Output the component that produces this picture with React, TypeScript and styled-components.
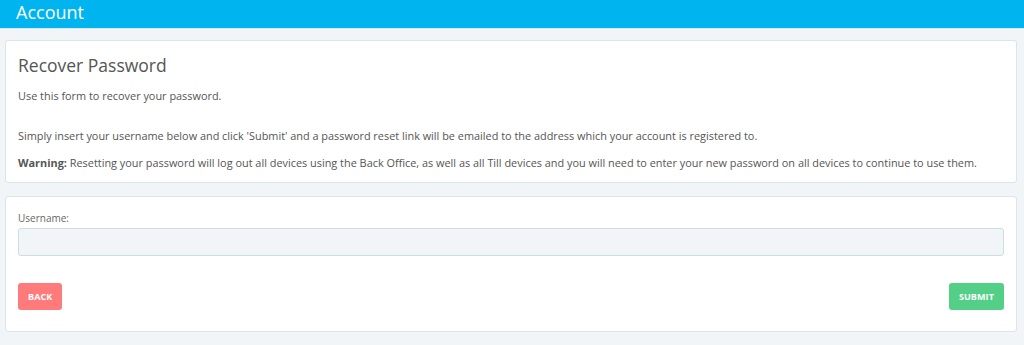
import React from "react";
import styled, { createGlobalStyle } from "styled-components";

const Global = createGlobalStyle`
  html, body { margin: 0; padding: 0; background: #f1f5f8; }
  body { font-family: "Open Sans", "Liberation Sans", sans-serif; color: #555; }
  * { box-sizing: border-box; }
`;

const Header = styled.header`
  height: 28px;
  background: #00b4f0;
  border-bottom: 1px solid #dde6ea;
  display: flex;
  align-items: center;
  padding-left: 16px;
  box-sizing: content-box;
`;

const HeaderTitle = styled.h1`
  margin: 0;
  color: #fff;
  font-size: 18px;
  font-weight: 400;
  line-height: 1;
  margin-top: -4px;
`;

const Content = styled.main`
  padding: 11px 7px 14px 5px;
  display: flex;
  flex-direction: column;
  gap: 13px;
`;

const Card = styled.section<{ $pad?: string }>`
  background: #fff;
  border: 1px solid #d8e7ea;
  border-radius: 3px;
  padding: ${(p) => p.$pad ?? "12px"};
`;

const Title = styled.h2`
  margin: 0 0 11px;
  font-size: 17.5px;
  font-weight: 400;
  line-height: 24px;
  color: #555;
`;

const Para = styled.p<{ $mb?: number }>`
  margin: 0 0 ${(p) => p.$mb ?? 0}px;
  font-size: 10.9px;
  line-height: 15px;
  color: #555;
  strong { font-weight: 700; }
`;

const Label = styled.label`
  display: block;
  font-size: 10px;
  line-height: 12px;
  color: #666;
  margin-bottom: 4px;
`;

const Input = styled.input`
  display: block;
  width: 100%;
  height: 28px;
  background: #f1f5f8;
  border: 1px solid #c9dfe2;
  border-radius: 3px;
  outline: none;
`;

const Actions = styled.div`
  display: flex;
  justify-content: space-between;
  margin-top: 27px;
`;

const Button = styled.button<{ $color: string }>`
  height: 27px;
  padding: 0 10px;
  border: none;
  border-radius: 3px;
  background: ${(p) => p.$color};
  color: #fff;
  font-family: "Open Sans", "Liberation Sans", sans-serif;
  font-weight: 700;
  font-size: 9px;
  letter-spacing: 0.1px;
  cursor: pointer;
`;

export default function App() {
  return (
    <>
      <Global />
      <Header>
        <HeaderTitle>Account</HeaderTitle>
      </Header>
      <Content>
        <Card $pad="12px 12px 12px">
          <Title>Recover Password</Title>
          <Para $mb={25}>Use this form to recover your password.</Para>
          <Para $mb={12}>
            Simply insert your username below and click 'Submit' and a password reset link will be emailed to the address which your account is registered to.
          </Para>
          <Para>
            <strong>Warning:</strong> Resetting your password will log out all devices using the Back Office, as well as all Till devices and you will need to enter your new password on all devices to continue to use them.
          </Para>
        </Card>
        <Card $pad="15px 12px 21px">
          <Label>Username:</Label>
          <Input type="text" />
          <Actions>
            <Button $color="#ff7b7b">BACK</Button>
            <Button $color="#53cf87">SUBMIT</Button>
          </Actions>
        </Card>
      </Content>
    </>
  );
}
